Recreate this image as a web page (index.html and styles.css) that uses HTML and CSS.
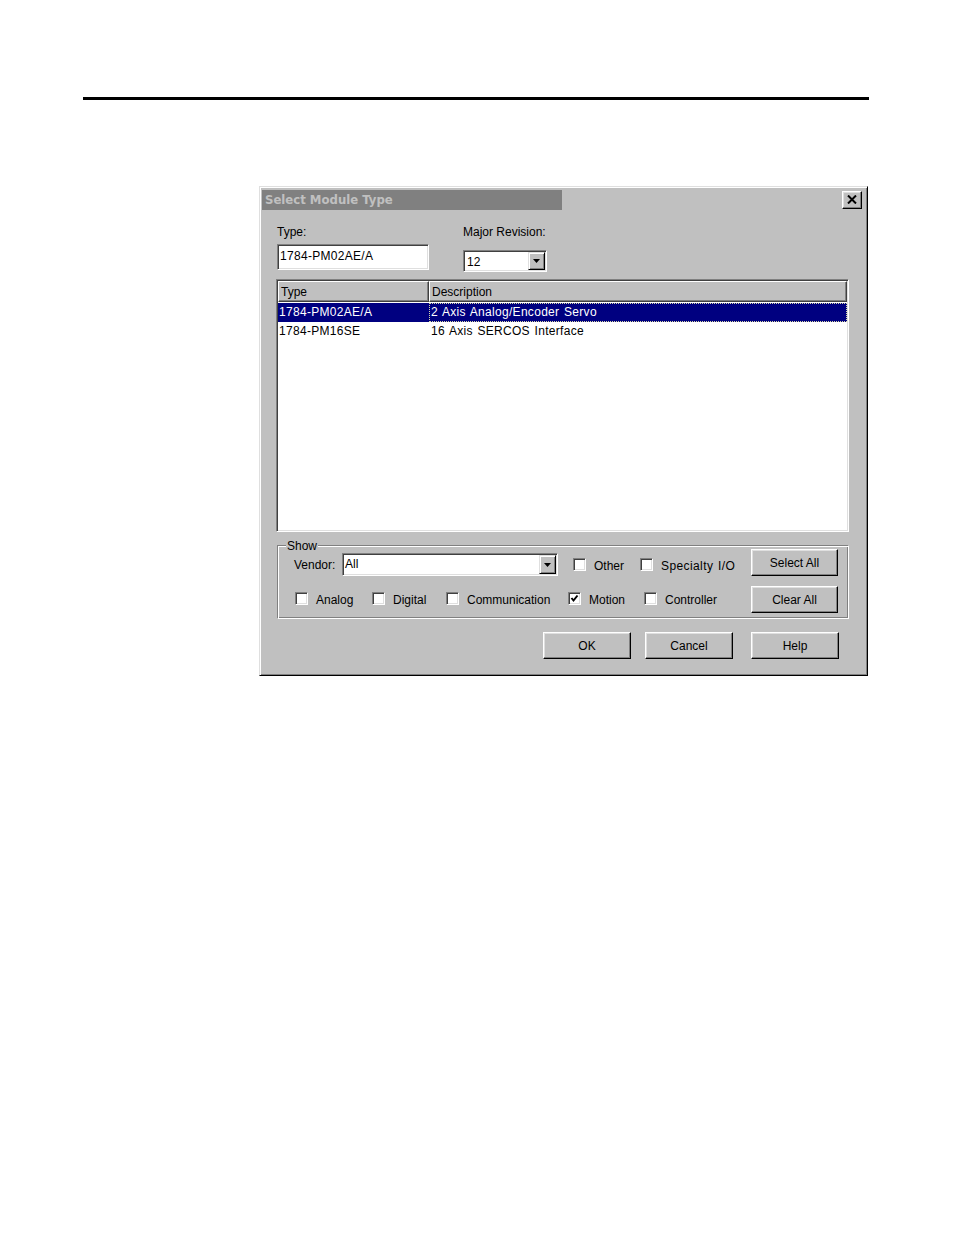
FILE: index.html
```html
<!DOCTYPE html>
<html>
<head>
<meta charset="utf-8">
<title>Select Module Type</title>
<link rel="stylesheet" href="styles.css">
</head>
<body>
<div class="page">
  <div class="rule"></div>
  <div class="dialog">
    <div class="titlebar">
      <div class="title">Select Module Type</div>
      <div class="close">
        <svg width="10" height="9" viewBox="0 0 10 9"><path d="M1 0.5 L9 8.5 M9 0.5 L1 8.5" stroke="#000" stroke-width="2" fill="none"/></svg>
      </div>
    </div>
    <div class="content">
      <div class="top">
        <div class="field f-type">
          <div class="label">Type:</div>
          <div class="textbox">1784-PM02AE/A</div>
        </div>
        <div class="field f-rev">
          <div class="label">Major Revision:</div>
          <div class="combo combo-rev">
            <span class="combo-text">12</span>
            <span class="combo-btn"><svg width="7" height="4" viewBox="0 0 7 4"><polygon points="0,0 7,0 3.5,4" fill="#000"/></svg></span>
          </div>
        </div>
      </div>

      <div class="list">
        <div class="list-head">
          <div class="hcell c1">Type</div>
          <div class="hcell c2">Description</div>
        </div>
        <div class="row sel">
          <div class="cell c1">1784-PM02AE/A</div>
          <div class="cell c2 focus">2 Axis Analog/Encoder Servo</div>
        </div>
        <div class="row">
          <div class="cell c1">1784-PM16SE</div>
          <div class="cell c2">16 Axis SERCOS Interface</div>
        </div>
      </div>

      <div class="group">
        <span class="legend">Show</span>
        <div class="group-left">
          <div class="grow r1">
            <span class="vlabel">Vendor:</span>
            <div class="combo combo-vendor">
              <span class="combo-text">All</span>
              <span class="combo-btn"><svg width="7" height="4" viewBox="0 0 7 4"><polygon points="0,0 7,0 3.5,4" fill="#000"/></svg></span>
            </div>
            <div class="chk w-other"><span class="box"></span><span class="ctext">Other</span></div>
            <div class="chk w-spec"><span class="box"></span><span class="ctext">Specialty I/O</span></div>
          </div>
          <div class="grow r2">
            <div class="chk w-analog"><span class="box"></span><span class="ctext">Analog</span></div>
            <div class="chk w-digital"><span class="box"></span><span class="ctext">Digital</span></div>
            <div class="chk w-comm"><span class="box"></span><span class="ctext">Communication</span></div>
            <div class="chk w-motion"><span class="box checked"><svg width="9" height="9" viewBox="0 0 9 9"><polyline points="1.5,4 3.5,6.5 7.5,1.5" stroke="#000" stroke-width="2" fill="none"/></svg></span><span class="ctext">Motion</span></div>
            <div class="chk w-ctrl"><span class="box"></span><span class="ctext">Controller</span></div>
          </div>
        </div>
        <div class="group-btns">
          <button class="btn gbtn">Select All</button>
          <button class="btn gbtn">Clear All</button>
        </div>
      </div>

      <div class="actions">
        <button class="btn abtn b-ok">OK</button>
        <button class="btn abtn b-cancel">Cancel</button>
        <button class="btn abtn b-help">Help</button>
      </div>
    </div>
  </div>
</div>
</body>
</html>
```

FILE: styles.css
```css
html, body {
  margin: 0;
  padding: 0;
  background: #ffffff;
}
body {
  font-family: "Liberation Sans", Arial, sans-serif;
  font-size: 12px;
  line-height: 14px;
  color: #000;
}
.page {
  width: 954px;
  height: 1235px;
  overflow: hidden;
}
.rule {
  margin: 97px 0 0 83px;
  width: 786px;
  height: 3px;
  background: #000;
}
.dialog {
  margin: 86px 0 0 259px;
  width: 609px;
  height: 490px;
  box-sizing: border-box;
  background: #c0c0c0;
  border: 1px solid;
  border-color: #dfdfdf #000 #000 #dfdfdf;
  box-shadow: inset 1px 1px #fff, inset -1px -1px #808080;
  padding: 3px 2px 0 2px;
}
.titlebar {
  display: flex;
  align-items: flex-start;
  height: 20px;
}
.title {
  width: 300px;
  height: 20px;
  background: #808080;
  color: #c0c0c0;
  font-family: "DejaVu Sans", Verdana, sans-serif;
  font-weight: bold;
  font-size: 11.7px;
  line-height: 20px;
  padding-left: 3px;
  box-sizing: border-box;
  white-space: nowrap;
}
.close {
  margin-left: auto;
  margin-right: 3px;
  margin-top: 1px;
  width: 20px;
  height: 18px;
  box-sizing: border-box;
  border: 1px solid;
  border-color: #fff #000 #000 #fff;
  box-shadow: inset -1px -1px #808080, inset 1px 1px #dfdfdf;
  display: flex;
  align-items: center;
  justify-content: center;
}
.close svg { display: block; margin-top: -1px; }

.content {
  padding-left: 14px;
}
.top {
  display: flex;
  align-items: flex-start;
  margin-top: 15px;
  padding-left: 1px;
}
.field .label {
  height: 14px;
  white-space: nowrap;
}
.f-type {
  width: 152px;
  margin-right: 34px;
}
.textbox {
  margin-top: 5px;
  width: 152px;
  height: 26px;
  box-sizing: border-box;
  background: #fff;
  border: 1px solid;
  border-color: #808080 #fff #fff #808080;
  box-shadow: inset 1px 1px #404040, inset -1px -1px #dfdfdf;
  padding: 4px 1px 0 2px;
  white-space: nowrap;
  letter-spacing: 0.3px;
}
.combo {
  display: flex;
  box-sizing: border-box;
  background: #fff;
  border: 1px solid;
  border-color: #808080 #fff #fff #808080;
  box-shadow: inset 1px 1px #404040, inset -1px -1px #dfdfdf;
  padding: 1px;
}
.combo-text {
  flex: 1;
  white-space: nowrap;
}
.combo-btn {
  width: 17px;
  box-sizing: border-box;
  background: #c0c0c0;
  border: 1px solid;
  border-color: #dfdfdf #000 #000 #dfdfdf;
  box-shadow: inset 1px 1px #fff, inset -1px -1px #808080;
  display: flex;
  align-items: center;
  justify-content: center;
}
.combo-btn svg { display: block; }
.combo-rev {
  margin-top: 11px;
  width: 84px;
  height: 22px;
}
.combo-rev .combo-text {
  padding: 3px 0 0 2px;
}
.combo-vendor {
  width: 216px;
  height: 23px;
}
.combo-vendor .combo-text {
  padding: 2px 0 0 1px;
}

.list {
  margin-top: 7px;
  width: 573px;
  height: 253px;
  box-sizing: border-box;
  background: #fff;
  border: 1px solid;
  border-color: #808080 #fff #fff #808080;
  box-shadow: inset 1px 1px #404040, inset -1px -1px #dfdfdf;
  padding: 1px;
}
.list-head {
  display: flex;
  height: 21px;
  margin-bottom: 1px;
}
.hcell {
  height: 21px;
  box-sizing: border-box;
  background: #c0c0c0;
  border: 1px solid;
  border-color: #fff #404040 #404040 #fff;
  box-shadow: inset -1px -1px #808080;
  padding: 3px 0 0 2px;
  white-space: nowrap;
}
.c1 { width: 151px; flex: none; }
.c2 { flex: 1; }
.row {
  display: flex;
  height: 19px;
  line-height: 19px;
  white-space: nowrap;
  letter-spacing: 0.3px;
  word-spacing: 1px;
}
.cell.c1 { padding-left: 1px; box-sizing: border-box; }
.cell.c2 { padding-left: 2px; }
.row.sel {
  background: #000080;
  color: #fff;
}
.focus {
  outline: 1px dotted #d8d8a8;
  outline-offset: -1px;
}

.group {
  position: relative;
  margin: 13px 0 0 1px;
  width: 572px;
  height: 74px;
  box-sizing: border-box;
  border: 1px solid;
  border-color: #808080 #fff #fff #808080;
  box-shadow: inset 1px 1px #fff, inset -1px -1px #808080;
  display: flex;
}
.legend {
  position: absolute;
  top: -7px;
  left: 8px;
  padding: 0 1px;
  background: #c0c0c0;
  line-height: 14px;
}
.group-left {
  width: 473px;
  padding-left: 16px;
  box-sizing: border-box;
}
.grow {
  display: flex;
  align-items: center;
  white-space: nowrap;
}
.r1 {
  margin-top: 7px;
  height: 23px;
}
.r2 {
  margin-top: 16px;
  height: 13px;
}
.vlabel {
  width: 48px;
  flex: none;
  margin-top: 1px;
}
.chk {
  display: flex;
  align-items: center;
  flex: none;
}
.box {
  width: 13px;
  height: 13px;
  flex: none;
  box-sizing: border-box;
  background: #fff;
  border: 1px solid;
  border-color: #808080 #fff #fff #808080;
  box-shadow: inset 1px 1px #404040, inset -1px -1px #dfdfdf;
  margin-right: 8px;
  display: flex;
  align-items: center;
  justify-content: center;
}
.box svg { display: block; }
.ctext { margin-top: 3px; }
.w-spec .ctext { letter-spacing: 0.4px; word-spacing: 1px; }
.w-other { margin-left: 15px; width: 67px; }
.w-spec { width: auto; }
.w-analog { margin-left: 1px; width: 77px; }
.w-digital { width: 74px; }
.w-comm { width: 122px; }
.w-motion { width: 76px; }
.w-ctrl { width: auto; }

.group-btns {
  width: 87px;
  display: flex;
  flex-direction: column;
  gap: 10px;
  margin-top: 3px;
}
.btn {
  font-family: "Liberation Sans", Arial, sans-serif;
  font-size: 12px;
  line-height: 14px;
  color: #000;
  background: #c0c0c0;
  box-sizing: border-box;
  border: 1px solid;
  border-color: #fff #000 #000 #fff;
  box-shadow: inset -1px -1px #808080, inset 1px 1px #dfdfdf;
  padding: 0;
  margin: 0;
  height: 27px;
  white-space: nowrap;
}
.gbtn { width: 87px; }
.actions {
  display: flex;
  margin-top: 13px;
  padding-left: 267px;
}
.abtn { width: 88px; }
.b-cancel { margin-left: 14px; }
.b-help { margin-left: 18px; }
```
